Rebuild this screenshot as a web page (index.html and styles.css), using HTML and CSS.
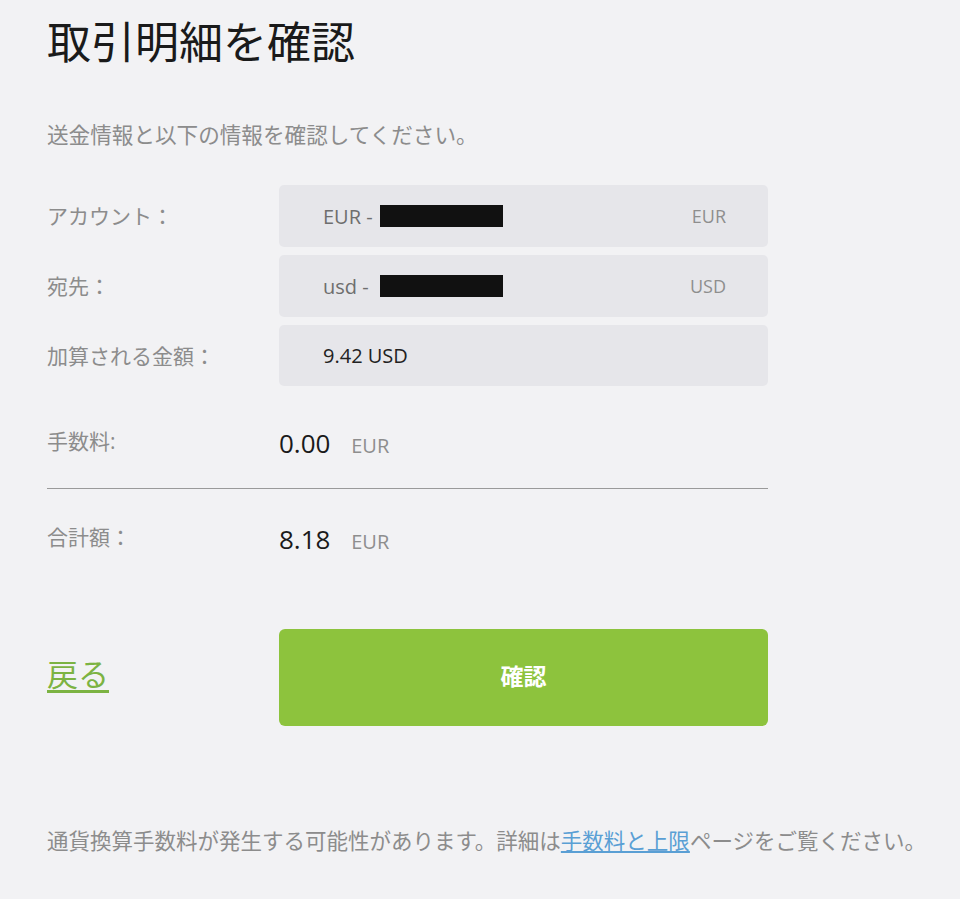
FILE: index.html
```html
<!DOCTYPE html>
<html lang="ja">
<head>
    <meta charset="UTF-8">
    <meta name="viewport" content="width=device-width, initial-scale=1.0">
    <title>取引明細を確認</title>
    <link rel="stylesheet" href="styles.css">
</head>
<body>

    <div class="page">
        <h1 class="title">取引明細を確認</h1>
        <p class="lead">送金情報と以下の情報を確認してください。</p>

        <div class="fields">
            <div class="label">アカウント：</div>
            <div class="box">
                <span class="acc"><span class="prefix">EUR -</span><span class="hidden-no"></span></span>
                <span class="cur">EUR</span>
            </div>

            <div class="label">宛先：</div>
            <div class="box">
                <span class="acc"><span class="prefix">usd -</span><span class="hidden-no"></span></span>
                <span class="cur">USD</span>
            </div>

            <div class="label">加算される金額：</div>
            <div class="box short">
                <span class="amount">9.42 USD</span>
            </div>
        </div>

        <div class="sum fee">
            <div class="label">手数料:</div>
            <div class="num">0.00 <span class="unit">EUR</span></div>
        </div>

        <hr class="divider">

        <div class="sum total">
            <div class="label">合計額：</div>
            <div class="num">8.18 <span class="unit">EUR</span></div>
        </div>

        <div class="actions">
            <a href="#" class="back">戻る</a>
            <button class="button confirm">確認</button>
        </div>

        <p class="note">通貨換算手数料が発生する可能性があります。詳細は<a href="#" class="link">手数料と上限</a>ページをご覧ください。</p>
    </div>

</body>
</html>
```

FILE: styles.css
```css
html, body {
  margin: 0;
  background: #f2f2f4;
}

body {
  font-family: "Open Sans", "Noto Sans CJK JP", sans-serif;
  color: #222;
}

.page {
  width: 721px;
  padding: 16px 0 40px 47px;
}

.title {
  margin: 0;
  font-size: 44px;
  line-height: 52px;
  font-weight: normal;
  color: #1a1a1a;
}

.lead {
  margin: 52px 0 0 0;
  font-size: 21.6px;
  line-height: 30px;
  color: #8c8c8c;
}

.fields {
  margin-top: 35px;
  display: grid;
  grid-template-columns: 232px 1fr;
  grid-auto-rows: 62px;
  row-gap: 8px;
}

.label {
  font-size: 21px;
  color: #8c8c8c;
  display: flex;
  align-items: center;
  padding-bottom: 2px;
}

.box {
  background: #e6e6ea;
  border-radius: 5px;
  display: flex;
  align-items: center;
  justify-content: space-between;
  padding: 0 42px 0 44px;
  font-size: 20px;
}

.box.short {height: 61px;}

.acc {color: #6e6e6e; display: flex; align-items: center;}
.prefix {width: 57px;}
.cur {color: #8e8e8e; font-size: 18px;}
.amount {color: #222;}

.hidden-no {
  display: inline-block;
  width: 123px;
  height: 22px;
  background: #111;
}

.sum {
  display: grid;
  grid-template-columns: 232px 1fr;
  height: 40px;
  align-items: center;
}

.fee {margin-top: 34px;}
.total {margin-top: 28px;}

.num {
  font-size: 26px;
  color: #1a1a1a;
  padding-top: 3px;
}

.unit {
  font-size: 20px;
  color: #8e8e8e;
  margin-left: 14px;
}

.divider {
  margin: 27px 0 0 0;
  border: none;
  border-top: 1px solid #9a9a9a;
}

.actions {
  margin-top: 72px;
  display: grid;
  grid-template-columns: 232px 1fr;
  align-items: center;
}

.back {
  font-size: 31px;
  line-height: 40px;
  color: #7cb342;
  text-decoration: underline;
  text-underline-offset: 4px;
  justify-self: start;
  margin-bottom: 8px;
}

.button {
  border: none;
  color: white;
  cursor: pointer;
  border-radius: 6px;
  font-family: inherit;
}

.confirm {
  height: 97px;
  background: #8dc33d;
  font-size: 23px;
  font-weight: bold;
  padding-bottom: 6px;
}
.confirm:hover {background: #83b836;}

.note {
  margin: 100px 0 0 0;
  width: 900px;
  font-size: 21.5px;
  line-height: 30px;
  color: #8c8c8c;
}

.link {
  color: #5a9fd4;
}
```
